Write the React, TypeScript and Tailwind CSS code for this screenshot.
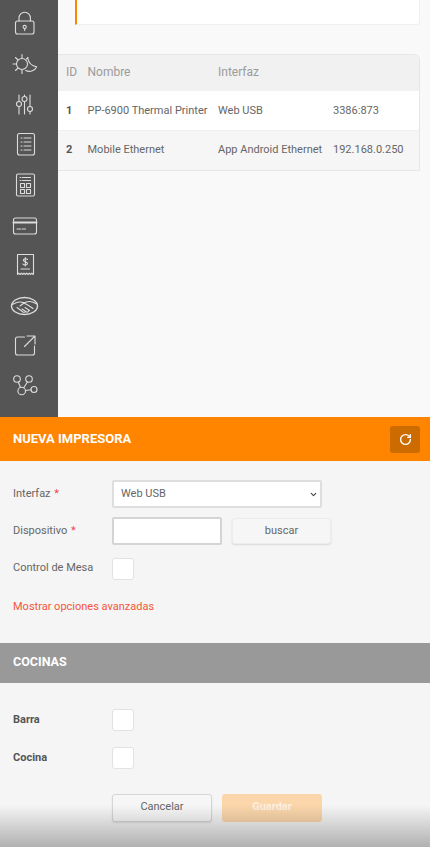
import React from 'react';
import { ChevronDown, RotateCw } from 'lucide-react';

// Sidebar icons: each one is drawn in a 50x40 cell
const iconPaths: React.ReactNode[] = [
  <>
    <rect x="15.5" y="16" width="18.5" height="13" rx="2" />
    <path d="M19 16v-3a5.7 5.7 0 0 1 11.4 0v3" />
    <circle cx="24.7" cy="22" r="1.6" />
    <path d="M24.7 23.6v2" />
  </>,
  <>
    <circle cx="22" cy="19" r="5.5" />
    <path d="M22 9.5v3.5M22 25v3.5M13 19h3.5M15.5 12.5l2.5 2.500M15.500 25.500l2.500-2.500M28 12.500l-1.500 1.500" />
    <path d="M27.700 13c.8 4.500 4 8 9 8.700-1.500 3.500-6.500 6-11 3.800" />
  </>,
  <>
    <path d="M19 10v6.500M19 21.500v7.500M24.500 10v1.500M24.500 16.500v12.500M30 10v11.500M30 26.500v2.500" />
    <circle cx="19" cy="19" r="2.500" />
    <circle cx="24.500" cy="14" r="2.500" />
    <circle cx="30" cy="24" r="2.500" />
  </>,
  <>
    <rect x="17.500" y="8.500" width="17" height="21.500" rx="2" />
    <path d="M21 13h1M24 13h7M21 17h1M24 17h7M21 21h1M24 21h7M21 25h1M24 25h7" />
  </>,
  <>
    <rect x="16.500" y="9" width="18" height="22" rx="1.500" />
    <path d="M20 12.500h1M22.500 12.500h8M20 15.500h1M22.500 15.500h8" />
    <path d="M20.500 18.500h4v4h-4zM26.500 18.500h4v4h-4zM20.500 24.500h4v4h-4zM26.500 24.500h4v4h-4z" />
  </>,
  <>
    <rect x="13.500" y="13" width="23" height="16" rx="2" />
    <path d="M13.500 17.500h23" strokeWidth="2" />
    <path d="M17 24h4M22.500 24h3" />
  </>,
  <>
    <path d="M17.500 29V9.500h16V29" />
    <path d="M17.500 29.500l1.300-1.300 1.300 1.300 1.300-1.300 1.300 1.300 1.300-1.300 1.300 1.300 1.300-1.300 1.300 1.300 1.300-1.300 1.300 1.300 1.300-1.300 1.300 1.300" />
    <path d="M27.500 14.500c-.5-1-3.800-1.300-4.200.5-.4 2 4.400 1.500 4.200 3.700-.2 1.700-3.800 1.600-4.600.3M25.300 12.500v8.500M21 24h8.500" />
  </>,
  <>
    <ellipse cx="24.500" cy="21" rx="13" ry="8.500" strokeWidth="1.400" />
    <path d="M12.500 19.500c2-1 4.500-3 8-2.500 2 .3 3 1 4.500 .5 3-1.200 5-1.500 7.500 -.5l4.500 2" />
    <path d="M20 21l4-3c2 1 6 3 9 5.500M17 22.500l6 4.500c1 .7 2.500 0 2.500-.5M22 24l4.500 3c1 .5 2.500-.5 2-1M25 22.500l4.500 3" />
  </>,
  <>
    <path d="M34.500 21v7a2 2 0 0 1-2 2h-15a2 2 0 0 1-2-2V14a2 2 0 0 1 2-2h7" />
    <path d="M24.500 21.500L34.500 11.500M27 11h8v8" />
  </>,
  <>
    <circle cx="17" cy="14" r="3.300" />
    <circle cx="29" cy="14" r="3.300" />
    <circle cx="21.700" cy="26" r="3.800" />
    <circle cx="34" cy="24.500" r="3" />
    <path d="M18.300 17l2.200 5.500M27.500 17l-3.800 5.700M25.500 25.500l5.500-.7" />
  </>,
];

const Checkbox: React.FC = () => (
  <div className="w-[22px] h-[22px] bg-white border border-[#e2e2e2] rounded-[3px]" />
);

const App: React.FC = () => {
  return (
    <div className="relative h-[847px] overflow-hidden bg-[#f5f5f5] text-[11px] text-[#666666] font-['Roboto',sans-serif]">
      {/* Top of the page, behind the form */}
      <div className="flex h-[417px] bg-[#f9f9f9]">
        <div className="w-[58px] shrink-0 flex flex-col pt-[5px] bg-[#555555]">
          {iconPaths.map((icon, i) => (
            <svg
              key={i}
              viewBox="0 0 50 40"
              fill="none"
              stroke="#dcdcdc"
              strokeWidth="1.100"
              strokeLinecap="round"
              strokeLinejoin="round"
              className="w-[50px] h-10 shrink-0"
            >
              {icon}
            </svg>
          ))}
        </div>

        <div className="flex-1 pr-[10px]">
          <div className="ml-[17px] h-[25px] bg-white border-l-2 border-l-[#ff8400] border-b border-r border-[#efefef] rounded-br-[3px]" />

          <div className="mt-[29px] border-t border-b border-r border-[#e6e6e6] rounded-tr-[6px] overflow-hidden">
            <div className="flex items-center h-[36px] pb-[2px] bg-[#f1f1f1] text-[#9b9b9b] text-[12px]">
              <div className="w-[29.500px] pl-2">ID</div>
              <div className="w-[130.500px]">Nombre</div>
              <div>Interfaz</div>
            </div>
            <div className="flex items-center h-[40px] pt-[1px] bg-white border-b border-[#f0f0f0]">
              <div className="w-[29.500px] pl-2 font-bold text-[#555555]">1</div>
              <div className="w-[130.500px]">PP-6900 Thermal Printer</div>
              <div className="w-[115px]">Web USB</div>
              <div>3386:873</div>
            </div>
            <div className="flex items-center h-[39px] pb-[1px] bg-[#f6f6f6]">
              <div className="w-[29.500px] pl-2 font-bold text-[#555555]">2</div>
              <div className="w-[130.500px]">Mobile Ethernet</div>
              <div className="w-[115px]">App Android Ethernet</div>
              <div>192.168.0.250</div>
            </div>
          </div>
        </div>
      </div>

      {/* Form sheet */}
      <div className="flex items-center justify-between h-[44px] pl-[13px] pr-[10px] bg-[#ff8400]">
        <h2 className="text-[13px] font-bold text-white uppercase">Nueva impresora</h2>
        <button className="flex items-center justify-center w-[30px] h-[27px] rounded-[3px] bg-[#cc6c00]">
          <RotateCw className="w-[13px] h-[13px] text-white" strokeWidth={2.500} />
        </button>
      </div>

      <div className="pl-[13px] pt-[19px]">
        <div className="flex items-center h-[28px]">
          <label className="w-[99px]">
            Interfaz <span className="ml-[1px] text-[#f0484e]">*</span>
          </label>
          <div className="relative w-[210px] h-[28px]">
            <select className="w-full h-full pl-[7px] appearance-none bg-white border-2 border-[#dedede] rounded-[2px] text-[11px] text-[#666666]">
              <option>Web USB</option>
            </select>
            <ChevronDown className="absolute right-[4px] top-[10px] w-[9px] h-[9px] text-[#444444] pointer-events-none" strokeWidth={3} />
          </div>
        </div>

        <div className="flex items-center h-[28px] mt-[9px]">
          <label className="w-[99px]">
            Dispositivo <span className="ml-[1px] text-[#f0484e]">*</span>
          </label>
          <input className="w-[110px] h-[28px] bg-white border-2 border-[#d4d4d4] rounded-[2px]" />
          <button className="ml-[10px] w-[99px] h-[26px] bg-[#f6f6f6] border border-[#ececec] rounded-[3px] shadow-[0_1px_2px_rgba(0,0,0,0.12)] text-[11px] text-[#666666]">
            buscar
          </button>
        </div>

        <div className="flex items-start h-[22px] mt-[13px]">
          <label className="w-[99px] mt-[2px]">Control de Mesa</label>
          <Checkbox />
        </div>

        <a className="block mt-[19px] text-[#f4553a]">Mostrar opciones avanzadas</a>
      </div>

      <div className="flex items-center h-[40px] mt-[27px] pl-[13px] bg-[#999999]">
        <h2 className="text-[12.500px] font-bold text-white uppercase">Cocinas</h2>
      </div>

      <div className="pl-[13px] pt-[26px]">
        <div className="flex items-start h-[22px]">
          <label className="w-[99px] mt-[3px] font-bold text-[#555555]">Barra</label>
          <Checkbox />
        </div>
        <div className="flex items-start h-[22px] mt-[16px]">
          <label className="w-[99px] mt-[3px] font-bold text-[#555555]">Cocina</label>
          <Checkbox />
        </div>

        <div className="flex gap-[10px] ml-[99px] mt-[25px]">
          <button className="w-[100px] h-[28px] bg-[#f6f6f6] border border-[#d6d6d6] rounded-[3px] shadow-[0_1px_2px_rgba(0,0,0,0.1)] text-[11px] text-[#666666]">
            Cancelar
          </button>
          <button className="w-[100px] h-[28px] bg-[#fbd6ab] rounded-[3px] font-bold text-[11px] text-[#fdf0e0]">
            Guardar
          </button>
        </div>
      </div>

      {/* Fade at the bottom edge of the window */}
      <div className="absolute left-0 right-0 bottom-0 h-[42px] pointer-events-none bg-gradient-to-b from-transparent to-[rgba(0,0,0,0.28)]" />
    </div>
  );
};

export default App;
